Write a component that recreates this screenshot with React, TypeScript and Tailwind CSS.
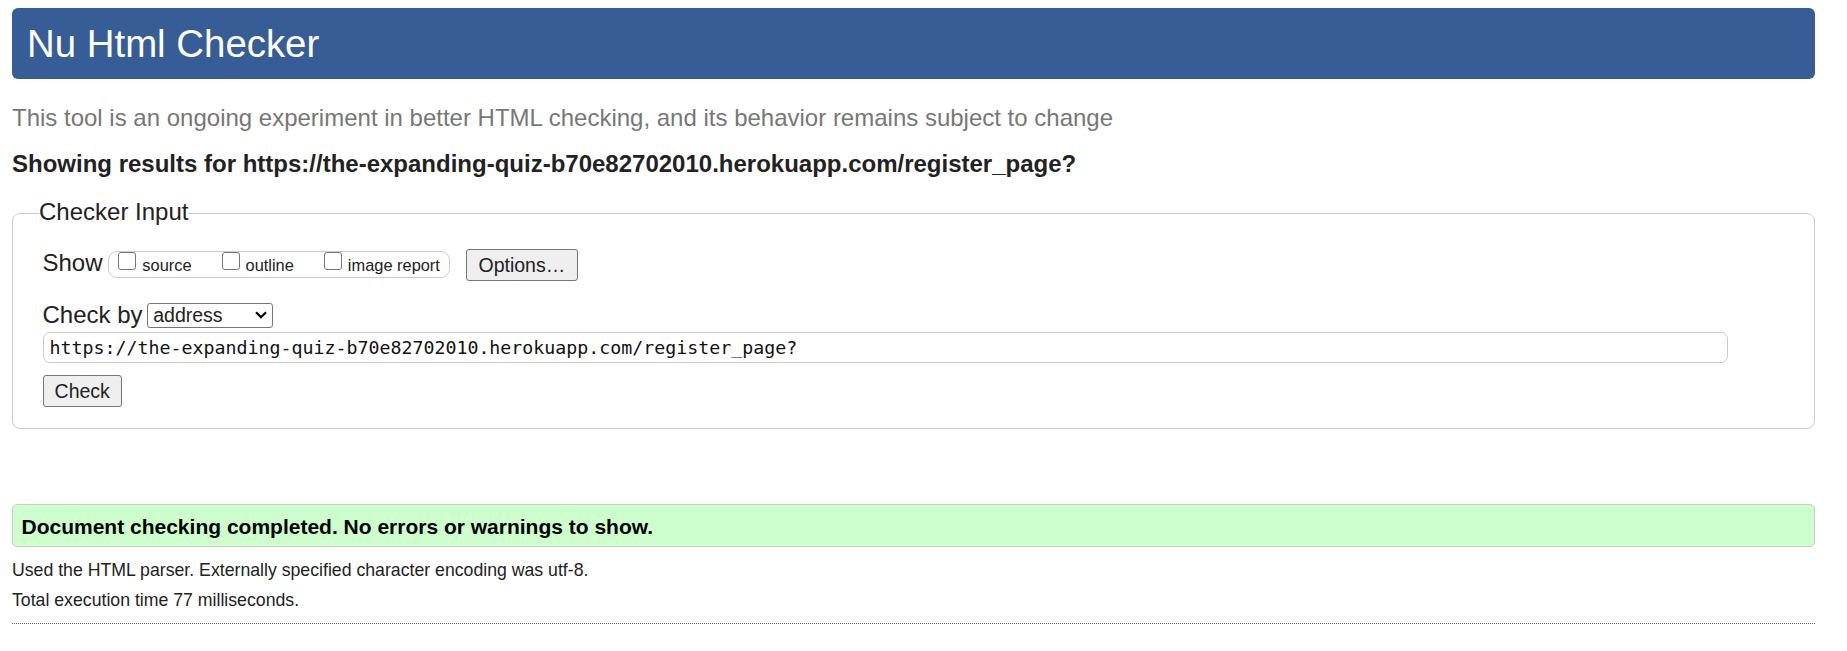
import React from "react";

const showOptions = ["source", "outline", "image report"];

const url = "https://the-expanding-quiz-b70e82702010.herokuapp.com/register_page?";

export default function App() {
  return (
    <div className="min-h-[651px] bg-white pt-[8px] pl-[12px] font-['Liberation_Sans',Arial,sans-serif] text-[#222]">
      <div className="w-[1802.5px]">
        {/* Header */}
        <header className="flex h-[71px] items-center rounded-[6px] bg-[#365d95] pl-[15px]">
          <h1 className="text-[38.4px] leading-[44px] font-normal text-white">Nu Html Checker</h1>
        </header>

        <p className="mt-[25.4px] text-[24px] leading-[28px] text-[#777]">
          This tool is an ongoing experiment in better HTML checking, and its behavior remains subject to change
        </p>
        <p className="mt-[18px] text-[24px] leading-[28px] font-bold">Showing results for {url}</p>

        {/* Checker input form */}
        <fieldset className="mt-[19.3px] rounded-[8px] border border-[#cccccc] pl-[29.5px] pb-[21.6px]">
          <legend className="-ml-[3.5px] pb-[3px] text-[24px] leading-[28px]">Checker Input</legend>

          <div className="mt-[20.6px] flex h-[31.4px] items-center">
            <span className="mb-[4px] text-[24px] leading-[28px]">Show</span>
            <div className="ml-[5.8px] flex h-[27px] items-start rounded-[9px] border border-[#cccccc] pl-[9px] pr-[9.5px]">
              {showOptions.map((opt, i) => (
                <label key={opt} className={`flex items-start ${i < showOptions.length - 1 ? "mr-[30px]" : ""}`}>
                  <input
                    type="checkbox"
                    className="h-[18px] w-[18px] appearance-none rounded-[3px] border border-[#767676] bg-white"
                  />
                  <span className="mt-[3.8px] ml-[6px] text-[16.4px] leading-[19px]">{opt}</span>
                </label>
              ))}
            </div>
            <button className="ml-[15.5px] h-[31.4px] w-[112px] rounded-[3px] border border-[#767676] bg-[#efefef] text-[19.5px] leading-[22px]">
              Options…
            </button>
          </div>

          <div className="mt-[22px] flex h-[25px] items-center">
            <span className="text-[24px] leading-[28px]">Check by</span>
            <div className="relative ml-[4.2px] h-[25px] w-[126px]">
              <select className="h-full w-full appearance-none rounded-[3px] border border-[#767676] bg-white pl-[5.5px] text-[19.5px] leading-[22px]">
                <option>address</option>
              </select>
              <svg
                className="pointer-events-none absolute right-[6px] top-[8.5px]"
                width="12"
                height="8"
                viewBox="0 0 12 8"
                fill="none"
              >
                <path d="M1 1.2L6 6.2L11 1.2" stroke="#000" strokeWidth="2.2" />
              </svg>
            </div>
          </div>

          <input
            type="text"
            readOnly
            value={url}
            className="mt-[4px] block h-[31px] w-[1685px] rounded-[7px] border border-[#cccccc] pl-[6px] font-['DejaVu_Sans_Mono',monospace] text-[18.27px] text-[#111]"
          />

          <button className="mt-[12.3px] block h-[31.7px] w-[79.4px] rounded-[3px] border border-[#767676] bg-[#efefef] text-[19.5px] leading-[22px]">
            Check
          </button>
        </fieldset>

        {/* Result */}
        <div className="mt-[75px] flex h-[43px] items-center rounded-[5px] border border-[#cccccc] bg-[#ccffcc] pl-[8.5px] pt-[2px]">
          <p className="text-[21px] leading-[24px] font-bold text-black">
            Document checking completed. No errors or warnings to show.
          </p>
        </div>

        <p className="mt-[11.5px] text-[17.7px] leading-[22px]">
          Used the HTML parser. Externally specified character encoding was utf-8.
        </p>
        <p className="mt-[8.7px] text-[17.7px] leading-[22px]">Total execution time 77 milliseconds.</p>
        <hr className="mt-[11.2px] border-t border-dotted border-[#666]" />
      </div>
    </div>
  );
}
